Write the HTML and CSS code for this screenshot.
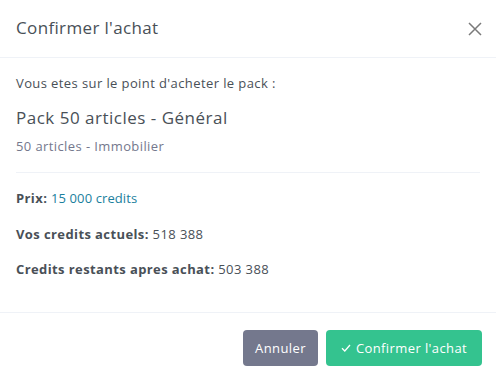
FILE: index.html
```html
<!DOCTYPE html>
<html lang="fr">
<head>
<meta charset="utf-8">
<link rel="stylesheet" href="styles.css">
</head>
<body>
<div class="modal">
  <div class="modal-header">
    <h4 class="modal-title">Confirmer l'achat</h4>
    <button class="btn-close" aria-label="Fermer">
      <svg width="14" height="14" viewBox="0 0 14 14"><path d="M1 1 L13 13 M13 1 L1 13" stroke="#7a7a7a" stroke-width="1.5" fill="none"/></svg>
    </button>
  </div>
  <div class="modal-body">
    <p class="lead-line">Vous etes sur le point d'acheter le pack :</p>
    <h5 class="pack-name">Pack 50 articles - Général</h5>
    <p class="muted">50 articles - Immobilier</p>
    <hr class="sep">
    <p><strong>Prix:</strong> <span class="price">15 000 credits</span></p>
    <p><strong>Vos credits actuels:</strong> 518 388</p>
    <p><strong>Credits restants apres achat:</strong> 503 388</p>
  </div>
  <div class="modal-footer">
    <button class="btn btn-secondary">Annuler</button>
    <button class="btn btn-success"><svg class="check" width="10" height="8" viewBox="0 0 10 8"><path d="M1 4.2 L3.8 7 L9 1" stroke="#fff" stroke-width="1.3" fill="none"/></svg> Confirmer l'achat</button>
  </div>
</div>
</body>
</html>
```
FILE: styles.css
```css
* { box-sizing: border-box; }
html, body { margin: 0; padding: 0; background: #fff; }
body {
  font-family: "Open Sans", "Liberation Sans", sans-serif;
  font-size: 13px;
  line-height: 1.5;
  color: #495057;
  letter-spacing: 0.4px;
}
.modal { width: 496px; height: 377px; background: #fff; overflow: hidden; }
.modal-header {
  height: 58px;
  display: flex;
  align-items: center;
  justify-content: space-between;
  padding: 0 14px 0 16px;
  border-bottom: 1px solid #eff2f7;
}
.modal-title { margin: 0; font-size: 17px; font-weight: 500; line-height: 1.2; color: #495057; letter-spacing: 0.35px; }
.btn-close { border: 0; background: none; padding: 0; width: 14px; height: 14px; display: flex; }
.modal-body { padding: 16px; }
.modal-body p { margin: 0 0 16px; }
.modal-body p.lead-line { margin-bottom: 14px; }
.pack-name { margin: 0 0 9px; font-size: 17px; font-weight: 500; line-height: 1.2; color: #495057; letter-spacing: 0.5px; }
.modal-body p.muted { margin: 0; color: #74788d; }
.sep { border: 0; border-top: 1px solid #eff2f7; margin: 16px 0; }
strong { font-weight: 700; }
.price { color: #1a809d; letter-spacing: 0.1px; }
.modal-footer {
  border-top: 1px solid #eff2f7;
  display: flex;
  justify-content: flex-end;
  gap: 8px;
  padding: 17px 14px 12px;
}
.btn {
  height: 36px;
  border: 0;
  border-radius: 4px;
  color: #fff;
  font-family: inherit;
  font-size: 13px;
  letter-spacing: 0.4px;
  padding: 0 12px;
  display: flex;
  align-items: center;
  justify-content: center;
  gap: 5px;
}
.btn-secondary { background: #74788d; width: 75px; }
.btn-success { background: #34c38f; width: 156px; }
.check { flex: none; }
```
